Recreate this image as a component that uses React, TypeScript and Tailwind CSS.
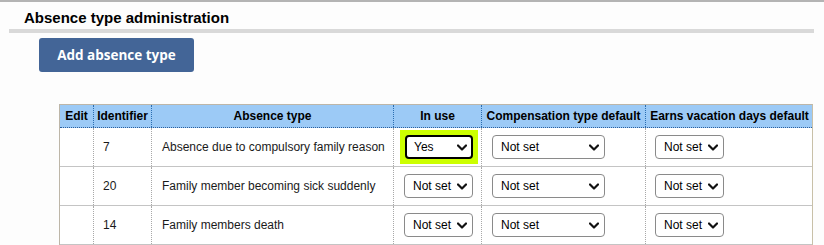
import React from 'react';

type SelectProps = {
  value: string;
  width: string;
  focused?: boolean;
};

const Chevron = () => (
  <svg width="10" height="7" viewBox="0 0 10 7" className="shrink-0">
    <path d="M1 1.5 L5 5.5 L9 1.5" fill="none" stroke="#111" strokeWidth="2.2" strokeLinecap="round" strokeLinejoin="round" />
  </svg>
);

const FakeSelect = ({ value, width, focused }: SelectProps) => {
  const box = (
    <div
      className={`${width} h-[24px] bg-white flex items-center justify-between whitespace-nowrap text-[12px] text-black ${
        focused ? 'border-2 border-black rounded-[4px] pl-[7px] pr-[4px]' : 'border border-[#8a8a8a] rounded-[4px] pl-[8px] pr-[5px]'
      }`}
    >
      <span>{value}</span>
      <Chevron />
    </div>
  );
  if (!focused) return box;
  return <div className="-ml-[4px] p-[5px] bg-[#ccff00] w-fit">{box}</div>;
};

const rows = [
  { id: '7', name: 'Absence due to compulsory family reason', inUse: 'Yes', focused: true },
  { id: '20', name: 'Family member becoming sick suddenly', inUse: 'Not set', focused: false },
  { id: '14', name: 'Family members death', inUse: 'Not set', focused: false },
];

const headers = ['Edit', 'Identifier', 'Absence type', 'In use', 'Compensation type default', 'Earns vacation days default'];

const cols = 'grid grid-cols-[33px_58px_242px_88px_164px_168px]';

export default function App() {
  return (
    <div className="w-[824px] h-[245px] overflow-hidden bg-[#fdfdfd] border-t-2 border-[#b4b4b4] font-['Liberation_Sans',Arial,sans-serif] text-[#1a1a1a]">
      <h1 className="h-[27px] pl-[24px] pt-[7px] text-[15px] leading-[18px] font-bold text-black">
        Absence type administration
      </h1>
      <div className="ml-[9px] w-[805px] h-[4px] bg-[#d9d9d9]" />

      <button className="ml-[39px] mt-[5px] w-[155px] h-[34px] rounded-[3px] bg-[#436597] text-white text-[13.5px] font-bold font-['Open_Sans',sans-serif]">
        Add absence type
      </button>

      <div className="ml-[59px] mt-[32px] w-[754px] border-t border-l border-[#bdb6a8] border-r border-r-[#c8c0a8]">
        <div className={`${cols} h-[23px] bg-[#9ccaf6] border-b border-dotted border-b-[#2a5f9e]`}>
          {headers.map((h, i) => (
            <div
              key={h}
              className={`flex items-center justify-center text-[12px] font-bold text-black whitespace-nowrap ${
                i > 0 ? 'border-l border-dotted border-l-[#2a6db0]' : ''
              }`}
            >
              {h}
            </div>
          ))}
        </div>

        {rows.map((r) => (
          <div key={r.id} className={`${cols} h-[39px] border-b border-[#c4c4c4] bg-white text-[12px] whitespace-nowrap`}>
            <div />
            <div className="flex items-center pl-[9px] border-l border-dotted border-l-[#a8a8a8]">{r.id}</div>
            <div className="flex items-center pl-[10px] border-l border-dotted border-l-[#a8a8a8]">{r.name}</div>
            <div className="flex items-center pl-[10px] border-l border-dotted border-l-[#a8a8a8]">
              <FakeSelect value={r.inUse} width={r.focused ? 'w-[68px]' : 'w-[69px]'} focused={r.focused} />
            </div>
            <div className="flex items-center pl-[10px] border-l border-dotted border-l-[#a8a8a8]">
              <FakeSelect value="Not set" width="w-[113px]" />
            </div>
            <div className="flex items-center pl-[9px] border-l border-dotted border-l-[#a8a8a8]">
              <FakeSelect value="Not set" width="w-[69px]" />
            </div>
          </div>
        ))}
      </div>
    </div>
  );
}
